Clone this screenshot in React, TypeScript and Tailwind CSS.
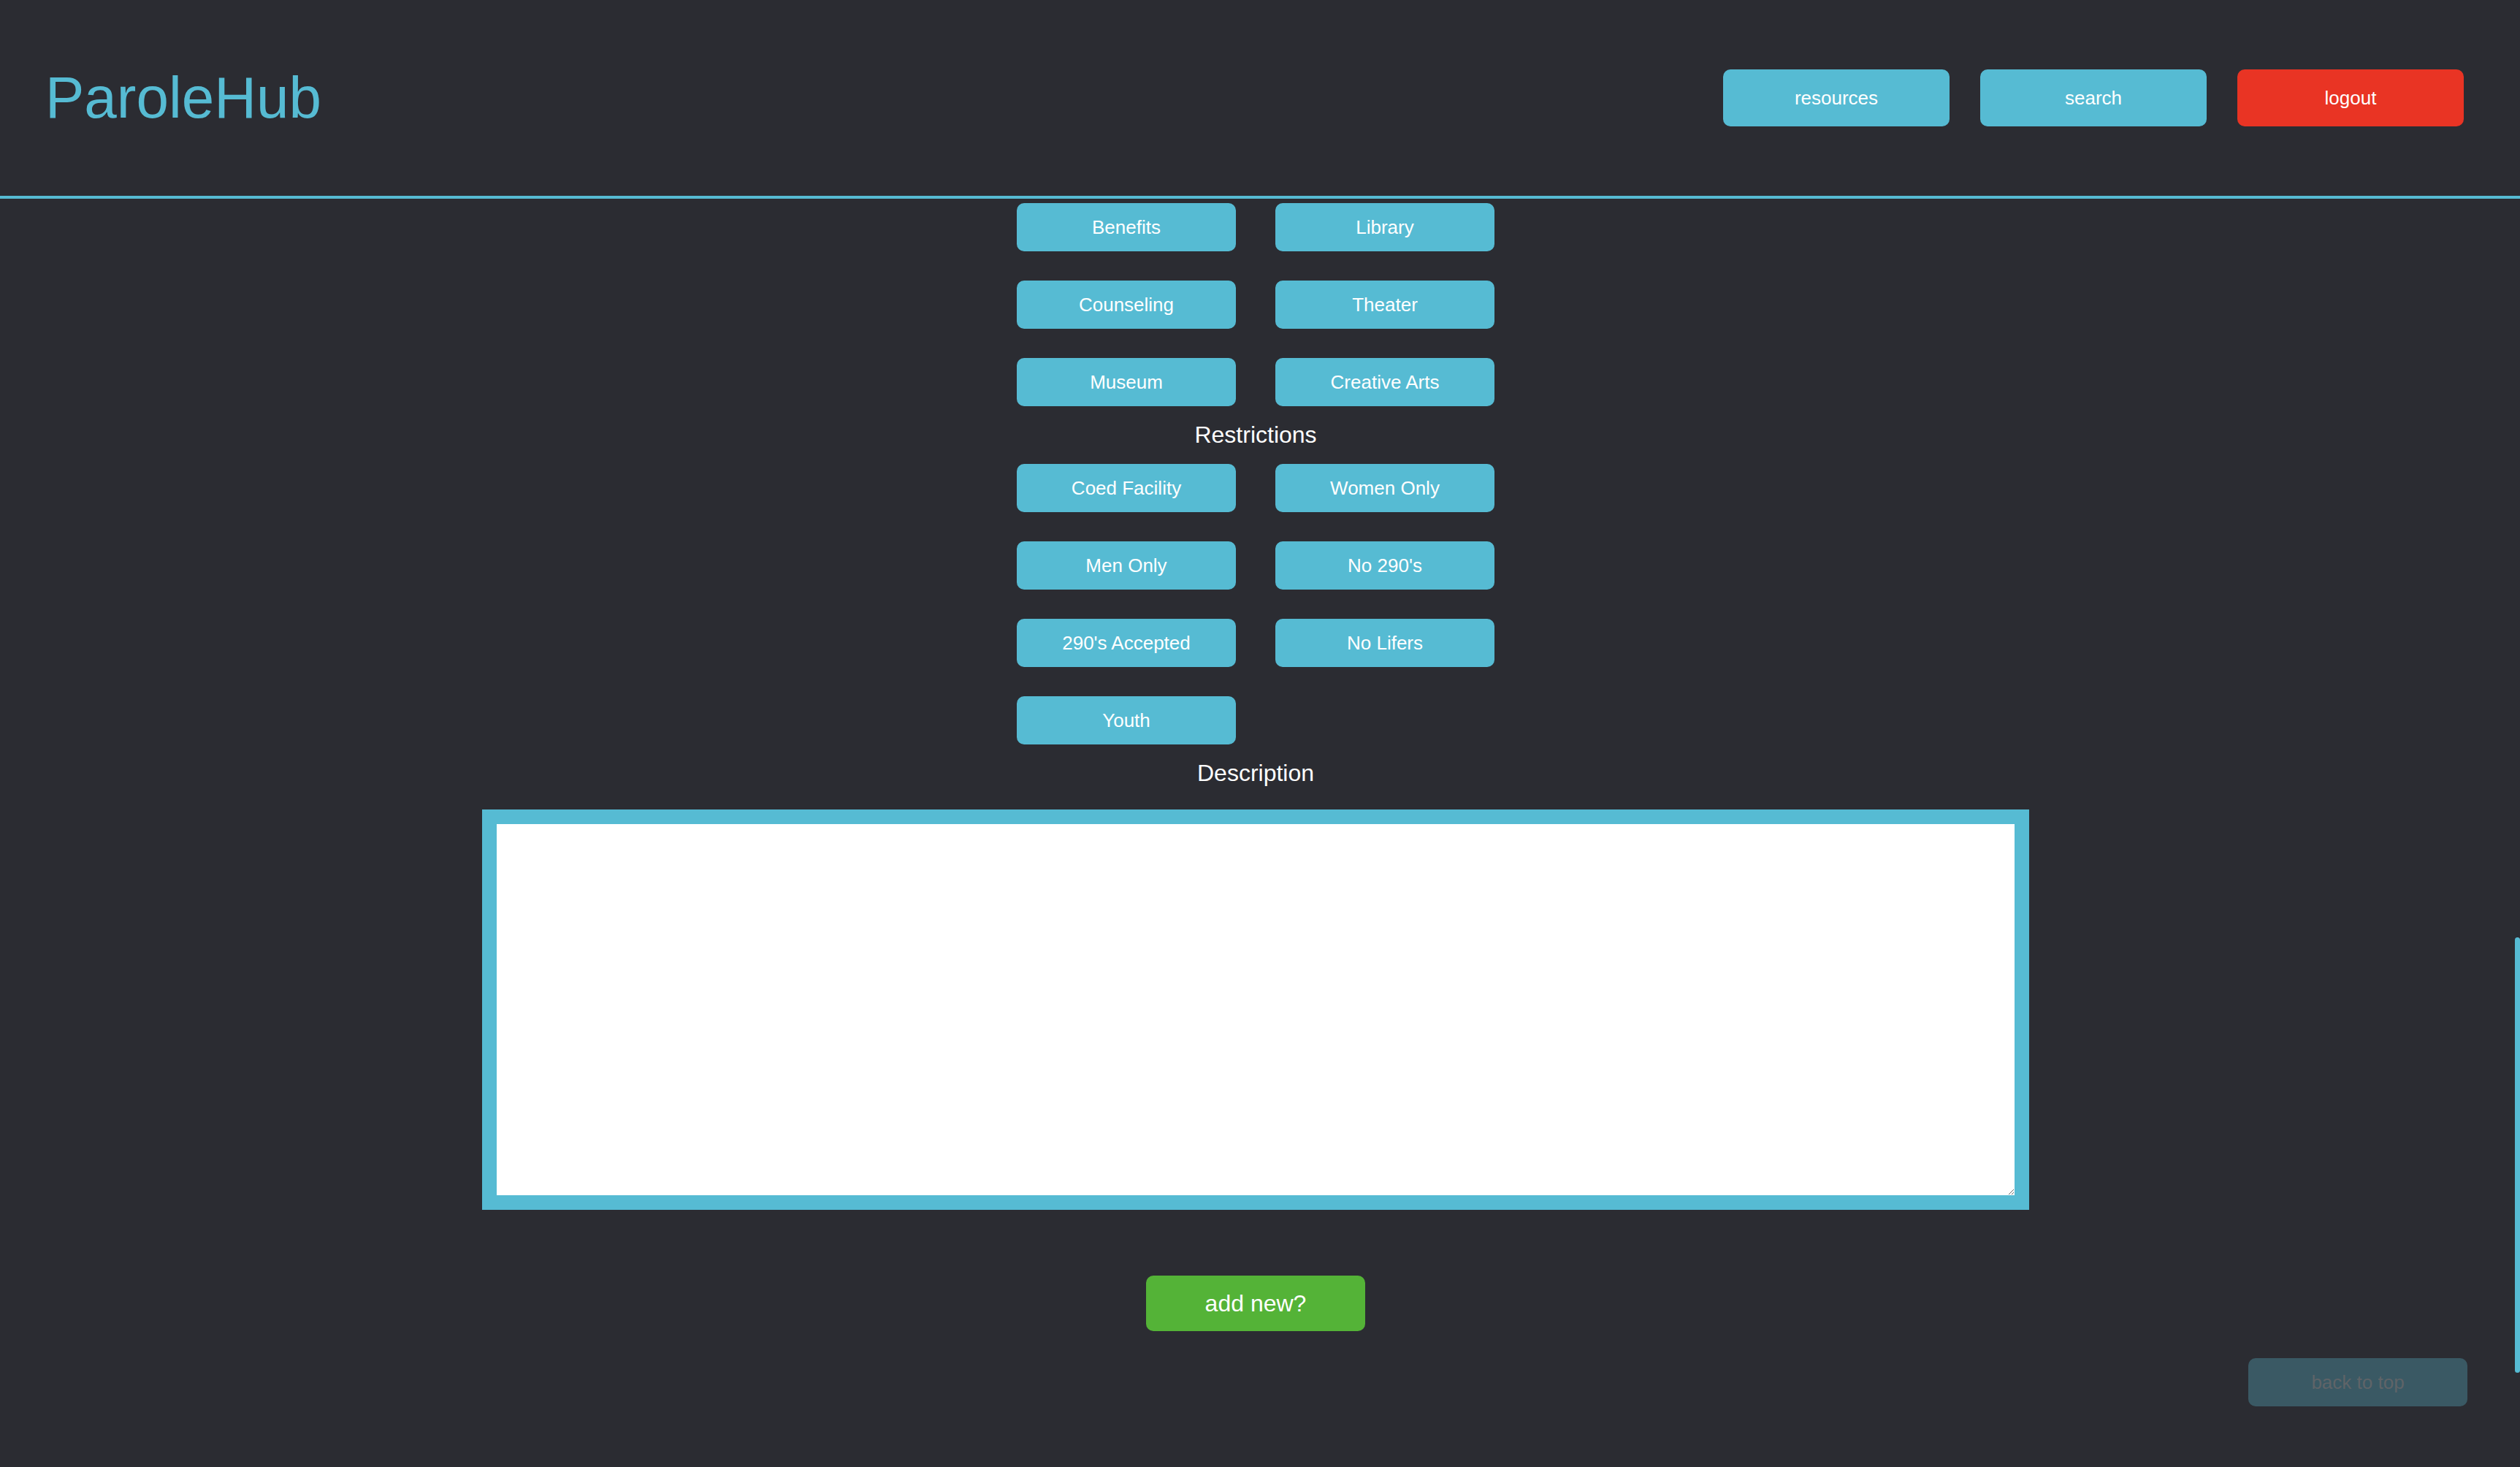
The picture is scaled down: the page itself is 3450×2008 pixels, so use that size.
import * as React from 'react';

const categories = ['Benefits', 'Library', 'Counseling', 'Theater', 'Museum', 'Creative Arts'];
const restrictions = ['Coed Facility', 'Women Only', 'Men Only', "No 290's", "290's Accepted", 'No Lifers', 'Youth'];

function TagButton({ label }: { label: string }) {
  return (
    <button
      type="button"
      className="h-[66px] w-[300px] rounded-[10px] bg-[#56bbd3] text-[26px] leading-none text-white"
    >
      {label}
    </button>
  );
}

function TagGrid({ items }: { items: string[] }) {
  return (
    <div className="grid grid-cols-[300px_300px] gap-x-[54px] gap-y-[40px]">
      {items.map(item => (
        <TagButton key={item} label={item} />
      ))}
    </div>
  );
}

export default function App() {
  const [description, setDescription] = React.useState('');

  return (
    <div className="relative min-h-screen bg-[#2b2c32] font-['Liberation_Sans',Arial,sans-serif]">
      <header className="flex h-[272px] items-center justify-between border-b-4 border-[#56bbd3] pl-[62px] pr-[77px]">
        <h1 className="text-[80px] font-normal leading-none text-[#56bbd3]">ParoleHub</h1>
        <nav className="flex gap-[42px]">
          <button type="button" className="h-[78px] w-[310px] rounded-[10px] bg-[#56bbd3] text-[26px] text-white">
            resources
          </button>
          <button type="button" className="h-[78px] w-[310px] rounded-[10px] bg-[#56bbd3] text-[26px] text-white">
            search
          </button>
          <button type="button" className="h-[78px] w-[310px] rounded-[10px] bg-[#e93424] text-[26px] text-white">
            logout
          </button>
        </nav>
      </header>

      <main className="flex flex-col items-center pb-[120px] pr-[12px] pt-[6px]">
        <TagGrid items={categories} />

        <h2 className="my-[21px] text-[32px] font-normal leading-[37px] text-white">Restrictions</h2>
        <TagGrid items={restrictions} />

        <h2 className="mt-[21px] text-[32px] font-normal leading-[37px] text-white">Description</h2>
        <textarea
          value={description}
          onChange={e => setDescription(e.target.value)}
          className="mt-[31px] h-[548px] w-[2118px] border-[20px] border-[#56bbd3] bg-white p-2 text-[26px] text-black outline-none"
        />

        <button
          type="button"
          className="mt-[90px] h-[76px] w-[300px] rounded-[10px] bg-[#54b337] text-[32px] text-white"
        >
          add new?
        </button>
      </main>

      <button
        type="button"
        className="fixed bottom-[83px] right-[72px] h-[66px] w-[300px] rounded-[10px] bg-[#3a5964] text-[26px] text-[#5f6468]"
      >
        back to top
      </button>

      <div className="fixed right-0 top-[1283px] h-[596px] w-[7px] rounded-full bg-[#56bbd3]" />
    </div>
  );
}
